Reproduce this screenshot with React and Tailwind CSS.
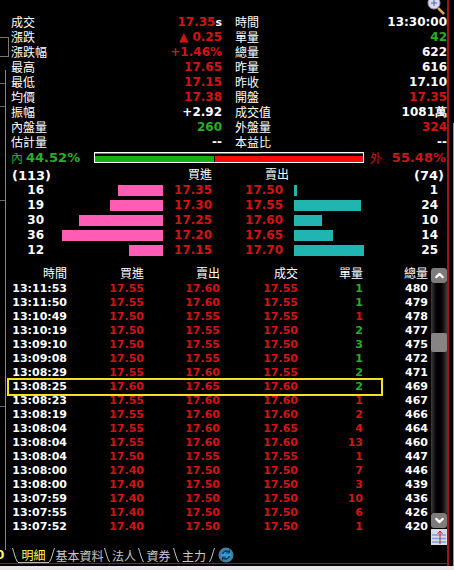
import React from "react";
import { ChevronUp, ChevronDown } from "lucide-react";

const R = "text-[#d41414]";
const G = "text-[#26b026]";
const W = "text-white";

// left and right columns of the quote block
const stats = [
  ["成交", "17.35", R, "時間", "13:30:00", W],
  ["漲跌", "▲ 0.25", R, "單量", "42", G],
  ["漲跌幅", "+1.46%", R, "總量", "622", W],
  ["最高", "17.65", R, "昨量", "616", W],
  ["最低", "17.15", R, "昨收", "17.10", W],
  ["均價", "17.38", R, "開盤", "17.35", R],
  ["振幅", "+2.92", W, "成交值", "1081萬", W],
  ["內盤量", "260", G, "外盤量", "324", R],
  ["估計量", "--", W, "本益比", "--", W],
];

const book = [
  [16, "17.35", "17.50", 1],
  [19, "17.30", "17.55", 24],
  [30, "17.25", "17.60", 10],
  [36, "17.20", "17.65", 14],
  [12, "17.15", "17.70", 25],
];

const ticks = [
  ["13:11:53", "17.55", "17.60", "17.55", "1", G, "480"],
  ["13:11:50", "17.55", "17.60", "17.55", "1", G, "479"],
  ["13:10:49", "17.50", "17.55", "17.55", "1", R, "478"],
  ["13:10:19", "17.50", "17.55", "17.50", "2", G, "477"],
  ["13:09:10", "17.50", "17.55", "17.50", "3", G, "475"],
  ["13:09:08", "17.50", "17.55", "17.50", "1", G, "472"],
  ["13:08:29", "17.55", "17.60", "17.55", "2", G, "471"],
  ["13:08:25", "17.60", "17.65", "17.60", "2", G, "469"],
  ["13:08:23", "17.55", "17.60", "17.60", "1", R, "467"],
  ["13:08:19", "17.55", "17.60", "17.60", "2", R, "466"],
  ["13:08:04", "17.55", "17.60", "17.65", "4", R, "464"],
  ["13:08:04", "17.55", "17.60", "17.60", "13", R, "460"],
  ["13:08:04", "17.50", "17.55", "17.55", "1", R, "447"],
  ["13:08:00", "17.40", "17.50", "17.50", "7", R, "446"],
  ["13:08:00", "17.40", "17.50", "17.50", "3", R, "439"],
  ["13:07:59", "17.40", "17.50", "17.50", "10", R, "436"],
  ["13:07:55", "17.40", "17.50", "17.50", "6", R, "426"],
  ["13:07:52", "17.40", "17.50", "17.50", "1", R, "420"],
];

const CJK = "font-['Noto_Sans_CJK_TC',sans-serif] font-normal";
const NUM = "font-['DejaVu_Sans',sans-serif] font-bold";

function StatCell({ label, value, color, suffix }) {
  return (
    <div className="flex h-[15px] items-center justify-between">
      <span className={`${CJK} mb-[2px] text-[12px] leading-[13px] text-white`}>{label}</span>
      <span className={`${NUM} text-[12px] leading-[15px] ${color}`}>
        {value}
        {suffix}
      </span>
    </div>
  );
}

function Slash({ back }) {
  return (
    <svg width="6" height="16" viewBox="0 0 6 16" className="shrink-0">
      <path
        d={back ? "M0.5 1 C2 5 3 11 5.5 15" : "M5.5 1 C4 5 3 11 0.5 15"}
        fill="none"
        stroke="#c8c8c8"
        strokeWidth="1"
      />
    </svg>
  );
}

function Tab({ w, active, children }) {
  return (
    <span
      className={`${CJK} text-center text-[12px] leading-[15px] ${w} ${
        active ? "text-[#ffff55] border-b border-[#bbbbbb]" : "text-[#c8c8c8]"
      }`}
    >
      {children}
    </span>
  );
}

export default function App() {
  return (
    <div className="flex h-[570px] w-[454px] flex-col overflow-hidden bg-[#e8e8e8]">
      <div className="relative flex h-[566px] bg-black">
        {/* stray window edges on the left */}
        <div className="absolute left-0 top-[37px] h-[20px] w-[9px] border-y border-r border-[#777777]" />
        <div className="absolute left-0 top-[83px] h-px w-[5px] bg-[#666666]" />
        <div className="absolute left-0 top-[106px] h-px w-[5px] bg-[#666666]" />
        <div className="absolute left-0 top-[200px] h-px w-[5px] bg-[#666666]" />
        <div className="absolute left-0 top-[406px] h-px w-[5px] bg-[#666666]" />

        <div className="mt-[70px] h-[480px] w-[6px] shrink-0 border-r border-[#888888]" />

        <div className="relative flex w-[443px] shrink-0 flex-col border-r-2 border-[#9c1414] pt-[15px]">
          {/* zoom icon */}
          <svg width="20" height="16" viewBox="0 0 20 16" className="absolute left-[424px] top-0 -translate-x-[4px]">
            <path d="M12 8 L18 14" stroke="#e8a050" strokeWidth="2.5" />
            <circle cx="8" cy="3" r="6" fill="#d8d8f0" stroke="#9a9ab8" />
            <path d="M8 0 V6 M5 3 H11" stroke="#5060a0" strokeWidth="1" />
          </svg>

          <div className="grid grid-cols-[211px_212px] gap-x-[13px] pl-[5px]">
            {stats.map((s, i) => (
              <React.Fragment key={s[0]}>
                <StatCell
                  label={s[0]}
                  value={s[1]}
                  color={s[2]}
                  suffix={i === 0 ? <span className="text-[11px] text-white">s</span> : null}
                />
                <StatCell label={s[3]} value={s[4]} color={s[5]} />
              </React.Fragment>
            ))}
          </div>

          {/* inner / outer ratio */}
          <div className="flex h-[15px] items-center pl-[5px]">
            <div className="flex w-[83px] items-center gap-[3px]">
              <span className={`${CJK} text-[12px] leading-[15px] text-[#26b026]`}>內</span>
              <span className={`${NUM} text-[13px] leading-[15px] text-[#26b026]`}>44.52%</span>
            </div>
            <div className="flex h-[11px] w-[270px] flex-col justify-between border border-white bg-black">
              <div className="flex h-[1px]">
                <div className="w-[166px] bg-[#1eb01e]" />
                <div className="flex-1 bg-[#f01010]" />
              </div>
              <div className="flex h-[6px] gap-[1px]">
                <div className="w-[119px] bg-[#14b014]" />
                <div className="flex-1 bg-[#f80a0a]" />
              </div>
            </div>
            <span className={`${CJK} ml-[6px] text-[12px] leading-[15px] text-[#c81818]`}>外</span>
            <span className={`${NUM} ml-auto mr-[1px] text-[13px] leading-[15px] text-[#c81818]`}>55.48%</span>
          </div>

          {/* order book */}
          <div className="flex h-[18px] items-center">
            <span className={`${NUM} ml-[6px] w-[40px] pt-[3px] text-[13px] leading-[15px] text-white`}>(113)</span>
            <span className={`${CJK} mb-[2px] w-[160px] text-right text-[12px] leading-[15px] text-white`}>買進</span>
            <span className={`${CJK} mb-[2px] w-[77px] text-right text-[12px] leading-[15px] text-white`}>賣出</span>
            <span className={`${NUM} ml-auto mr-[3px] pt-[3px] text-[13px] leading-[15px] text-white`}>(74)</span>
          </div>
          {book.map((b) => (
            <div key={b[1]} className="flex h-[15px] items-center">
              <span className={`${NUM} w-[38px] text-right text-[12px] leading-[15px] text-white`}>{b[0]}</span>
              <div className="flex w-[119px] justify-end">
                <div className="h-[11px] bg-[#ff5cb5]" style={{ width: b[0] * 2.8 }} />
              </div>
              <span className={`${NUM} w-[49px] text-right text-[12px] leading-[15px] ${R}`}>{b[1]}</span>
              <span className={`${NUM} w-[71px] text-right text-[12px] leading-[15px] ${R}`}>{b[2]}</span>
              <div className="w-[82px] pl-[11px]">
                <div className="h-[11px] bg-[#20b5b0]" style={{ width: b[3] * 2.8 }} />
              </div>
              <span className={`${NUM} w-[73px] text-right text-[12px] leading-[15px] text-white`}>{b[3]}</span>
            </div>
          ))}

          {/* ticks + scrollbar */}
          <div className="mt-[8px] flex h-[281px]">
            <div className="w-[425px] pl-[6px]">
              <div className="grid h-[16px] grid-cols-[55px_77px_76px_78px_65px_65px] items-start text-right">
                {["時間", "買進", "賣出", "成交", "單量", "總量"].map((h) => (
                  <span key={h} className={`${CJK} text-[12px] leading-[14px] text-white`}>
                    {h}
                  </span>
                ))}
              </div>
              {ticks.map((t) => (
                <div
                  key={t[6]}
                  className={`${NUM} relative grid h-[14px] grid-cols-[55px_77px_76px_78px_65px_65px] items-center text-right text-[11px] leading-[14px]`}
                >
                  <span className="whitespace-nowrap text-white">{t[0]}</span>
                  <span className={R}>{t[1]}</span>
                  <span className={R}>{t[2]}</span>
                  <span className={R}>{t[3]}</span>
                  <span className={t[5]}>{t[4]}</span>
                  <span className="text-white">{t[6]}</span>
                  {t[6] === "469" && (
                    <div className="absolute left-[-5px] top-[-2px] h-[18px] w-[376px] border-2 border-[#f5e21e]" />
                  )}
                </div>
              ))}
            </div>
            <div className="mt-[2px] flex h-[277px] w-[16px] flex-col">
              <div className="flex h-[15px] items-center justify-center rounded-[3px] bg-[#7c7c7c]">
                <ChevronUp size={13} strokeWidth={4} color="white" />
              </div>
              <div className="h-[230px] bg-gradient-to-r from-[#3c3c3c] via-black to-[#3c3c3c] pt-[50px]">
                <div className="h-[19px] rounded-[2px] bg-[#858585]" />
              </div>
              <div className="flex h-[15px] items-center justify-center rounded-[3px] bg-[#7c7c7c]">
                <ChevronDown size={13} strokeWidth={4} color="white" />
              </div>
              <svg width="16" height="16" viewBox="0 0 16 16" className="mt-px">
                <rect width="16" height="16" fill="#d5dce8" />
                <path d="M1 6 H15 M1 9.5 H15 M1 13 H15" stroke="#7f9fd8" strokeWidth="1.6" />
                <path d="M9 15 V2 M6.5 5 L9 2 L11.5 5" fill="none" stroke="#c02030" strokeWidth="1" />
              </svg>
            </div>
          </div>

          {/* bottom tabs */}
          <div className="-ml-[6px] flex h-[16px] items-center overflow-hidden">
            <span className={`${NUM} -ml-[4px] w-[16px] text-[12px] leading-[15px] text-[#ffff55]`}>0</span>
            <Slash back />
            <Tab w="w-[31px]" active>明細</Tab>
            <Slash />
            <Tab w="w-[49px]">基本資料</Tab>
            <Slash back />
            <Tab w="w-[28px]">法人</Tab>
            <Slash back />
            <Tab w="w-[29px]">資券</Tab>
            <Slash back />
            <Tab w="w-[30px]">主力</Tab>
            <Slash />
            <svg width="16" height="16" viewBox="0 0 16 16" className="ml-[3px]">
              <circle cx="8" cy="8" r="7.5" fill="#3f7f9f" />
              <circle cx="8" cy="8" r="5" fill="#2f9fdf" />
              <path d="M4.5 7 A4 4 0 0 1 11 5 M11.5 9 A4 4 0 0 1 5 11" fill="none" stroke="#12324a" strokeWidth="1.5" />
              <path d="M11.5 2.5 V6 H8 M4.5 13.5 V10 H8" fill="none" stroke="#12324a" strokeWidth="1" />
            </svg>
          </div>
        </div>

        <div className="mt-[123px] h-[443px] flex-1 border-r border-[#999999]" />
        <div className="absolute bottom-[2px] left-0 h-px w-[449px] bg-[#9c1414]" />
      </div>
    </div>
  );
}
